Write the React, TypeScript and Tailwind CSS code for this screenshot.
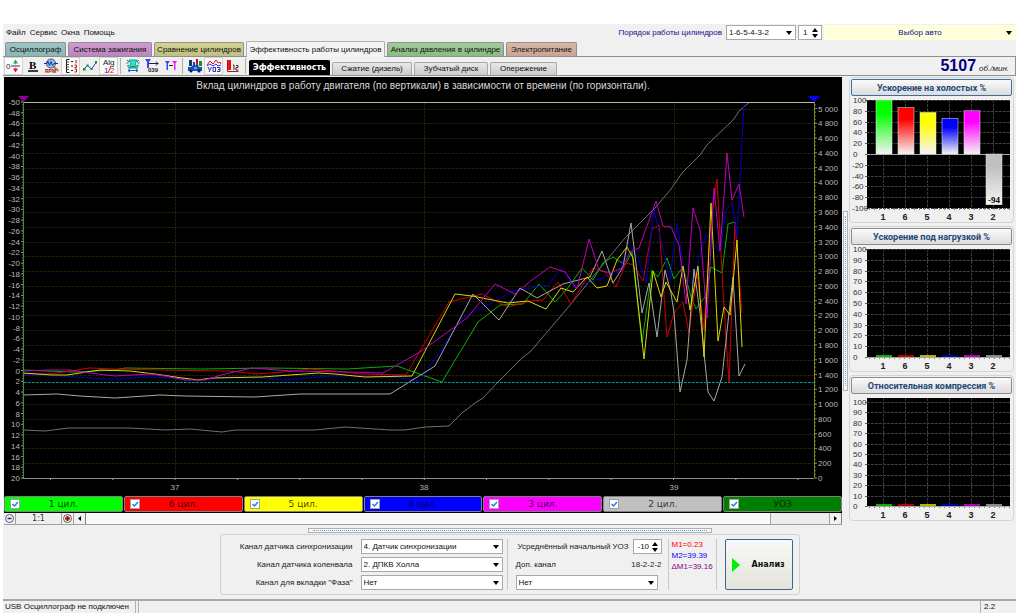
import { useState } from "react";
import type { ReactNode } from "react";
import clsx from "clsx";

/** A polyline of the main chart, in chart units. */
interface Series {
    color: string;
    points: string;
}

/** One of the three small bar charts on the right. */
interface MiniChartProps {
    title: string;
    /** Values in the order of the cylinders below; null when nothing was measured. */
    values: number[] | null;
    /** Lowest value of the scale. */
    min: number;
    step: number;
    /** Position of the 100 % mark. */
    top: number;
    focused?: boolean;
}

const CYLINDERS = ["1", "6", "5", "4", "3", "2"];
const BAR_COLORS = ["#00ff00", "#ff0000", "#ffff00", "#0000ff", "#ff00ff", "#c0c0c0"];

const SERIES: Series[] = [
    {
        color: "#707070",
        points: "23,430 45,431 68,428 130,428 165,430 190,429 222,432 235,430 315,430 345,427 390,430 405,430 425,427 449,426 462,413 475,403 483,398 498,382 522,358 530,352 571,304 600,268 625,238 655,208 671,189 682,173 700,155 707,145 733,120 740,110 750,102",
    },
    {
        color: "#00b400",
        points: "23,370 48,371 75,372 115,370 125,368 200,369 267,368 347,369 397,366 442,382 478,322 500,305 523,304 539,284 555,302 567,289 582,268 593,280 603,263 613,257 625,265 632,252 642,343 652,270 658,277 667,258 674,279 683,267 691,297 696,309 705,297 711,267 722,273 728,224 735,222",
    },
    {
        color: "#d00000",
        points: "23,374 50,374 70,371 90,368 115,369 160,370 230,371 257,374 283,372 310,369 335,371 360,374 406,375 430,334 449,302 482,294 508,307 530,301 543,300 558,282 571,304 593,268 605,272 616,287 626,263 633,265 643,281 652,229 659,225 667,337 674,313 683,302 689,333 697,273 704,330 711,220 717,179 723,290 729,383 735,222 742,313",
    },
    {
        color: "#0000c0",
        points: "23,374 60,376 90,378 115,379 145,377 175,378 200,380 230,377 255,377 285,380 330,376 365,376 400,378 420,381 462,318 480,309 513,291 548,285 560,270 563,270 575,288 587,283 620,272 628,243 638,258 646,283 654,210 670,280 677,223 685,277 692,285 706,234 720,252 726,210 732,203 737,237 744,103",
    },
    {
        color: "#a8a8a8",
        points: "23,395 57,394 80,396 115,398 160,395 185,396 255,397 300,394 390,394 435,366 473,294 499,320 520,288 537,298 563,284 590,277 602,251 613,283 623,267 631,223 642,313 649,283 657,337 665,270 671,293 674,313 680,392 687,360 694,269 700,313 708,392 714,401 722,377 729,313 733,277 739,376 745,364",
    },
    {
        color: "#d8d800",
        points: "23,373 52,375 67,375 100,370 130,371 155,374 175,377 198,380 212,378 262,377 318,373 335,374 365,377 412,376 455,294 472,296 508,303 528,301 546,309 561,288 573,292 587,277 597,288 607,286 617,260 627,247 633,258 644,359 653,271 661,297 666,282 677,302 683,266 690,310 698,266 704,357 711,203 718,341 724,307 730,315 737,240 742,347",
    },
    {
        color: "#c000c0",
        points: "23,371 50,370 70,370 90,373 115,376 150,374 165,376 185,380 205,380 225,374 252,368 290,371 350,372 383,373 420,352 467,318 495,284 515,294 532,280 550,267 565,272 577,289 589,239 599,270 610,273 622,268 630,252 639,248 656,201 663,226 671,227 679,245 686,304 693,208 700,230 707,318 714,188 720,251 727,153 732,200 739,184 744,217",
    },
];

const LEGEND = [
    { label: "1 цил.", style: "bg-[#00ff00]" },
    { label: "6 цил.", style: "bg-[#ff0000]" },
    { label: "5 цил.", style: "bg-[#ffff00]" },
    { label: "4 цил.", style: "bg-[#0000ff]" },
    { label: "3 цил.", style: "bg-[#ff00ff]" },
    { label: "2 цил.", style: "bg-[#c0c0c0]" },
    { label: "УОЗ", style: "bg-[#008000]" },
];

const MAIN_TABS = [
    { label: "Осциллограф", style: "w-[61px] from-[#9cc4c4] to-[#8ab6b6]" },
    { label: "Система зажигания", style: "w-[84px] from-[#cf9bd0] to-[#bb84bd]" },
    { label: "Сравнение цилиндров", style: "w-[90px] from-[#d2d292] to-[#c0c080]" },
    { label: "Эффективность работы цилиндров", style: "w-[139px]" },
    { label: "Анализ давления в цилиндре", style: "w-[117px] from-[#a2cd9c] to-[#88bc82]" },
    { label: "Электропитание", style: "w-[71px] from-[#d8b8a6] to-[#c8a592]" },
];

const SUB_TABS = [
    { label: "Эффективность", style: "w-[81px]" },
    { label: "Сжатие (дизель)", style: "w-[80px]" },
    { label: "Зубчатый диск", style: "w-[74px]" },
    { label: "Опережение", style: "w-[67px]" },
];

/** Evenly spaced numbers from start to end, both included. */
function range(start: number, end: number, step: number) {
    const out: number[] = [];
    for (let v = start; v <= end; v += step) out.push(v);
    return out;
}

function Icon({ children }: { children: ReactNode }) {
    return (
        <svg viewBox="0 0 16 16" className="w-4 h-4" aria-hidden="true">
            {children}
        </svg>
    );
}

const ICON_FONT = "Liberation Sans, sans-serif";

const TOOLS: { name: string; pressed?: boolean; divider?: boolean; icon: ReactNode }[] = [
    {
        name: "Ноль",
        pressed: true,
        icon: (
            <Icon>
                <text x="0" y="11" fontSize="8" fontFamily={ICON_FONT} fill="#303030">0</text>
                <path d="M5 8h9" stroke="#303060" />
                <path d="M9.500 6.500v-4M9.500 9.500v4" stroke="#a0a0a0" />
                <path d="M7 5.500l2.500-4 2.500 4z" fill="#20b040" />
                <path d="M7 10.500l2.500 4 2.500-4z" fill="#f01010" />
            </Icon>
        ),
    },
    {
        name: "Жирные линии",
        icon: (
            <Icon>
                <text x="4" y="11" fontSize="11" fontWeight="bold" fontFamily="Liberation Serif, serif" fill="#000">B</text>
                <path d="M3 13h10" stroke="#000" strokeWidth="1.500" />
            </Icon>
        ),
    },
    {
        name: "Лупа RPM",
        icon: (
            <Icon>
                <path d="M9.500 8.500l5 4.500" stroke="#c08040" strokeWidth="2" />
                <circle cx="7" cy="5.500" r="4.500" fill="#8cc8f0" stroke="#405080" />
                <path d="M0 5.500h3l1-2 1.500 4 1.500-4 1.500 4 1.500-2h4" fill="none" stroke="#1030a0" />
                <text x="1" y="15" fontSize="5" fontWeight="bold" fontFamily={ICON_FONT} fill="#a01010">RPM</text>
            </Icon>
        ),
    },
    {
        name: "Шкала",
        pressed: true,
        icon: (
            <Icon>
                <path d="M6.500 1.500h-3v13h3" fill="none" stroke="#202020" />
                <path d="M4 4h2M4 6.500h2M4 9h2M4 11.500h2" stroke="#505050" />
                <path d="M8 3.500h2M8 8h2M8 12.500h2" stroke="#202020" />
                <path d="M13 2v3.500M11.500 7h2v2.500h-2M11.500 11h2v3h-2" fill="none" stroke="#c01010" />
            </Icon>
        ),
    },
    {
        name: "Сглаживание",
        icon: (
            <Icon>
                <path d="M2 11l3.500-3.500 4 3.500 5-7" fill="none" stroke="#2040d0" />
                <path d="M1 10h2.500v2.500h-2.500zM4.500 6.500h2v2h-2zM8.500 10h2v2h-2zM13 3h2v2.500h-2z" fill="#109020" />
            </Icon>
        ),
    },
    {
        name: "Алгоритм",
        pressed: true,
        icon: (
            <Icon>
                <text x="2" y="7" fontSize="8" fontFamily={ICON_FONT} fill="#202020">Alg</text>
                <text x="3" y="15" fontSize="8" fontFamily={ICON_FONT} fill="#2030e0">1</text>
                <path d="M7 15l3-7" stroke="#e02020" />
                <text x="9" y="15" fontSize="8" fontFamily={ICON_FONT} fill="#e02020">2</text>
            </Icon>
        ),
    },
    {
        name: "Двигатель",
        divider: true,
        icon: (
            <Icon>
                <path d="M2 2l2 2M14 2l-2 2M1.500 5h2M14.500 5h-2M2 8l2-1M14 8l-2-1" stroke="#108030" />
                <path d="M4 2h8l-2 4 3 4h-10l3-4z" fill="#30e0d8" stroke="#10a090" />
                <path d="M5 10c0-2 6-2 6 0" fill="none" stroke="#108030" />
                <path d="M3 12.500h10M5 11l-2 1.500 2 1.500M11 11l2 1.500-2 1.500" fill="none" stroke="#1060d0" />
            </Icon>
        ),
    },
    {
        name: "Маркер 039",
        icon: (
            <Icon>
                <path d="M1 1h6l-2 3v6h-2v-6z" fill="#4040ff" />
                <path d="M5 5.500h9M12 3.500l2 2-2 2" fill="none" stroke="#202020" />
                <text x="4" y="14" fontSize="6" fontWeight="bold" fontFamily={ICON_FONT} fill="#202020">039</text>
            </Icon>
        ),
    },
    {
        name: "Маркеры",
        icon: (
            <Icon>
                <path d="M2 3h5l-2 2.500v6.500h-1.500v-6.500z" fill="#4040ff" />
                <path d="M9 3h5l-1.500 2.500v6.500h-1.500v-6.500z" fill="#f020f0" />
                <path d="M6 7.500h4" stroke="#202020" />
            </Icon>
        ),
    },
    {
        name: "Эффективность авто",
        divider: true,
        icon: (
            <Icon>
                <path d="M2 2h3v6h-3z" fill="#104060" />
                <path d="M6 4h2v5h-2z" fill="#1040e0" />
                <path d="M9 1h2v6h-2z" fill="#c01010" />
                <path d="M12 3h3v5h-3z" fill="#109030" />
                <path d="M1 9h3l2-2h5l1 2h3v4h-14z" fill="#1050c0" />
                <circle cx="4" cy="13" r="1.500" fill="#102040" />
                <circle cx="12" cy="13" r="1.500" fill="#102040" />
                <path d="M7 10h3" stroke="#d0e8ff" />
            </Icon>
        ),
    },
    {
        name: "УОЗ",
        pressed: true,
        icon: (
            <Icon>
                <path d="M1 7l3-4 3 3 3-4 2 3 2-1 1 2" fill="none" stroke="#e01010" />
                <path d="M1 8l3-2 3 2 3-2 2 2 3-1" fill="none" stroke="#3030ff" />
                <path d="M2 9l1.500 3M5.500 9l-2.500 5M7 9.500h2.500v4h-2.500zM11 9.500h3v4h-3M12 11.500h2" fill="none" stroke="#3030c0" />
            </Icon>
        ),
    },
    {
        name: "Статистика",
        icon: (
            <Icon>
                <path d="M2 2h4v10h-4z" fill="#f01010" />
                <path d="M2.500 2v11.500h11" fill="none" stroke="#c01010" />
                <path d="M8 7h1v5M11 7.500h2v2h-2v2.500h2.500" fill="none" stroke="#303030" />
            </Icon>
        ),
    },
];

/** Black triangle shown inside drop-down fields. */
function Caret() {
    return (
        <svg viewBox="0 0 6 4" className="pointer-events-none absolute right-1 top-1/2 w-[6px] h-1 -translate-y-1/2" aria-hidden="true">
            <path d="M0 0h6l-3 4z" fill="#000" />
        </svg>
    );
}

interface SelectProps {
    id: string;
    value: string;
    options?: string[];
    className?: string;
    label?: string;
}

function Select({ id, value, options = [], className, label }: SelectProps) {
    const [current, setCurrent] = useState(value);
    return (
        <div className={clsx("relative", className)}>
            <select
                id={id}
                aria-label={label}
                value={current}
                onChange={e => setCurrent(e.target.value)}
                className="block w-full h-[15px] appearance-none border border-[#a8a8a8] bg-white pl-[2px] text-[8px] leading-3 text-[#101010]"
            >
                {[value, ...options].map(o => <option key={o}>{o}</option>)}
            </select>
            <Caret />
        </div>
    );
}

function Stepper({ id, initial, label, className }: { id: string; initial: string; label?: string; className: string }) {
    const [value, setValue] = useState(initial);
    return (
        <div className={clsx("relative shrink-0", className)}>
            <input
                id={id}
                aria-label={label}
                value={value}
                onChange={e => setValue(e.target.value)}
                className="block w-full h-[15px] border border-[#a8a8a8] bg-white pl-1 text-[8px] leading-3 text-[#101010]"
            />
            <svg viewBox="0 0 6 10" className="pointer-events-none absolute right-1 top-[3px] w-[6px] h-[10px]" aria-hidden="true">
                <path d="M0 4l3-4 3 4zM0 6h6l-3 4z" fill="#000" />
            </svg>
        </div>
    );
}

/** Contribution of each cylinder against time, with engine speed on the right axis. */
function MainChart() {
    const leftY = (v: number) => 102 + ((v + 50) * 376) / 70;
    const rightY = (v: number) => 478 - v * 0.0739;

    return (
        <svg viewBox="4 93 838 403" className="block w-full h-auto" fontFamily="Liberation Sans, sans-serif" fontSize="8">
            {range(200, 5000, 200).map(v => (
                <path key={v} d={`M24 ${Math.round(rightY(v)) + 0.5}H814`} stroke="#222200" strokeDasharray="3 1" />
            ))}
            {[175.5, 424.5, 674.5].map(x => (
                <path key={x} d={`M${x} 103V478`} stroke="#222200" strokeDasharray="3 1" />
            ))}

            {SERIES.map(s => (
                <polyline key={s.color} points={s.points} fill="none" stroke={s.color} />
            ))}
            <path d="M24 382.500H814" stroke="#009090" strokeDasharray="3 1" />

            {/* Frame and tick marks */}
            <path d="M23 102.500H814" stroke="#b8b8a8" />
            <path d="M23 478.500H814" stroke="#909090" />
            <path d="M23.500 102V478" stroke="#3c8c3c" />
            <path d="M814.500 102V478" stroke="#808020" />
            {range(-50, 20, 0.5).map(v => (
                <path key={v} d={`M22 ${leftY(v)}h1`} stroke="#686868" />
            ))}
            {range(0, 5050, 50).map(v => (
                <path key={v} d={`M815 ${rightY(v)}h1`} stroke="#686830" />
            ))}
            {range(50.5, 810, 62.3).map(x => (
                <path key={x} d={`M${x} 478v2`} stroke="#909090" />
            ))}

            <g fill="#b8b8b8">
                {range(-50, 20, 2).map(v => (
                    <text key={v} x="20" y={leftY(v) + 3} textAnchor="end">{v}</text>
                ))}
                {range(-50, 20, 2).map(v => (
                    <path key={v} d={`M21 ${leftY(v)}h2`} stroke="#909090" />
                ))}
                {range(0, 5000, 200).map(v => (
                    <text key={v} x="818" y={rightY(v) + 3}>
                        {v >= 1000 ? `${Math.floor(v / 1000)} ${String(v % 1000).padStart(3, "0")}` : v}
                    </text>
                ))}
                {range(0, 5000, 200).map(v => (
                    <path key={v} d={`M815 ${rightY(v)}h2`} stroke="#909060" />
                ))}
                <text x="175" y="490" textAnchor="middle">37</text>
                <text x="424" y="490" textAnchor="middle">38</text>
                <text x="674" y="490" textAnchor="middle">39</text>
            </g>

            <path d="M18 96h11l-5.500 6z" fill="#8c008c" />
            <path d="M808 96h12l-6 6z" fill="#0000ff" />
        </svg>
    );
}

function MiniChart({ title, values, min, step, top, focused }: MiniChartProps) {
    const bottom = 112;
    const y = (v: number) => bottom - ((v - min) * (bottom - top)) / (100 - min);

    return (
        <section className="rounded-sm border border-[#d4d4d4] pt-px px-px">
            <button
                type="button"
                className={clsx(
                    "block w-full h-[17px] rounded-[2px] border bg-linear-to-b from-[#fafafa] to-[#dcdcdc] font-[Roboto,sans-serif] text-[9px] leading-3 font-bold text-[#1c4878]",
                    focused ? "border-[#3c70a0]" : "border-[#8c8c8c]",
                )}
            >
                {title}
            </button>
            <svg viewBox="0 0 161 126" className="block w-full h-auto" fontFamily="Liberation Sans, sans-serif" fontSize="8">
                <defs>
                    {BAR_COLORS.map((c, i) => (
                        <linearGradient key={c} id={`bar${i}`} x1="0" y1="0" x2="0" y2="1">
                            <stop offset="0.25" stopColor={c} />
                            <stop offset="1" stopColor="#f4f4f4" />
                        </linearGradient>
                    ))}
                </defs>
                <rect x="16" y="4" width="143" height="108" fill="#000" />
                {range(min, 100, step).map(v => (
                    <g key={v}>
                        <path d={`M16 ${Math.round(y(v)) + 0.5}h143`} stroke="#3c3c3c" strokeDasharray="3 1" />
                        <path d={`M14 ${Math.round(y(v)) + 0.5}h2`} stroke="#606060" />
                        <text x={v < 0 ? 1 : 2} y={y(v) + 3} fill="#303030">{v}</text>
                    </g>
                ))}
                {CYLINDERS.map((c, i) => (
                    <path key={c} d={`M${32.5 + i * 22} 4v108`} stroke="#3c3c3c" strokeDasharray="3 1" />
                ))}
                {range(18, 158, 5).map(x => (
                    <path key={x} d={`M${x + 0.5} 112v2`} stroke="#808080" />
                ))}
                <path d={`M16 ${Math.round(y(0)) + 0.5}h143`} stroke="#a8a8a8" />
                {CYLINDERS.map((c, i) => {
                    const value = values?.[i];
                    return (
                        <g key={c}>
                            {value === undefined ? (
                                <rect x={25 + i * 22} y="110" width="16" height="2" fill={BAR_COLORS[i]} opacity="0.7" />
                            ) : (
                                <rect
                                    x={25 + i * 22}
                                    y={y(Math.max(value, 0))}
                                    width="16"
                                    height={Math.abs(y(value) - y(0))}
                                    fill={`url(#bar${i})`}
                                    stroke="#e8e8e8"
                                    strokeWidth="0.500"
                                />
                            )}
                            {value !== undefined && value < 0 && (
                                <text x={33 + i * 22} y={y(value) - 2} textAnchor="middle" fontFamily="Liberation Serif, serif" fontWeight="bold" fontSize="9" fill="#000">
                                    {value}
                                </text>
                            )}
                            <text x={32 + i * 22} y="124" textAnchor="middle" fontSize="9" fontWeight="bold" fill="#202020">{c}</text>
                        </g>
                    );
                })}
            </svg>
        </section>
    );
}

function LegendItem({ label, style }: { label: string; style: string }) {
    const [checked, setChecked] = useState(true);
    return (
        <label className={clsx("relative flex flex-1 items-center justify-center h-4 rounded-[2px] border border-[#808080]", style)}>
            <span className="absolute left-[5px] grid">
                <input
                    type="checkbox"
                    checked={checked}
                    onChange={() => setChecked(!checked)}
                    className="col-start-1 row-start-1 w-[10px] h-[10px] appearance-none border border-[#a0a0a0] bg-white"
                />
                {checked && (
                    <svg viewBox="0 0 10 10" className="pointer-events-none col-start-1 row-start-1 w-[10px] h-[10px]" aria-hidden="true">
                        <path d="M2.500 5l2 2 3.500-4" fill="none" stroke="#2080e8" strokeWidth="1.500" />
                    </svg>
                )}
            </span>
            <span className="font-['DejaVu_Sans',sans-serif] text-[9px] leading-3 text-black/75">{label}</span>
        </label>
    );
}

function ScrollRow() {
    return (
        <div className="flex h-3 bg-[#f8f8f8] border-b border-[#a0a0a0] text-[9px] leading-3">
            <button type="button" aria-label="Уменьшить" className="w-3 border-r border-[#a0a0a0] bg-[#f0f0f0]">
                <svg viewBox="0 0 11 11" className="w-[11px] h-[11px]">
                    <circle cx="5.500" cy="5.500" r="4" fill="#f4f4f4" stroke="#606060" />
                    <path d="M3.500 5.500h4" stroke="#2020a0" strokeWidth="1.500" />
                </svg>
            </button>
            <div className="w-[46px] bg-[#eeeeee] border-r border-[#a0a0a0] text-center font-['DejaVu_Sans',sans-serif] text-[8px] text-[#303030]">1:1</div>
            <button type="button" aria-label="Увеличить" className="w-3 border-r border-[#a0a0a0] bg-[#f0f0f0]">
                <svg viewBox="0 0 11 11" className="w-[11px] h-[11px]">
                    <circle cx="5.500" cy="5.500" r="4" fill="#f4f4f4" stroke="#606060" />
                    <path d="M3 5.500h5M5.500 3v5" stroke="#a01010" strokeWidth="2" />
                </svg>
            </button>
            <button type="button" aria-label="Влево" className="w-3 border-r border-[#808080] bg-[#f0f0f0]">
                <svg viewBox="0 0 11 11" className="w-[11px] h-[11px]"><path d="M7 3v5l-3-2.500z" fill="#000" /></svg>
            </button>
            <div className="flex flex-1 justify-end">
                <div className="w-[60px] border-x border-[#a0a0a0] bg-[#ececec]" />
            </div>
            <button type="button" aria-label="Вправо" className="w-3 border-r border-[#808080] bg-[#f0f0f0]">
                <svg viewBox="0 0 11 11" className="w-[11px] h-[11px]"><path d="M4 3v5l3-2.500z" fill="#000" /></svg>
            </button>
        </div>
    );
}

function SensorPanel() {
    return (
        <div className="mx-auto flex w-[580px] items-stretch rounded-[3px] border border-[#d0d0d0] px-[6px] py-1">
            <div className="grid flex-1 grid-cols-[1fr_142px] items-center gap-x-2 gap-y-[3px] text-right text-[8px] leading-3 text-[#202020]">
                <label htmlFor="sync">Канал датчика синхронизации</label>
                <Select id="sync" value="4.  Датчик синхронизации" className="text-left" />
                <label htmlFor="crank">Канал датчика коленвала</label>
                <Select id="crank" value="2.  ДПКВ Холла" className="text-left" />
                <label htmlFor="phase">Канал для вкладки "Фаза"</label>
                <Select id="phase" value="Нет" className="text-left" />
            </div>
            <div className="ml-1 flex w-[162px] flex-col justify-between border-x border-[#c8c8c8] pl-2 pr-[6px] text-[8px] leading-3 text-[#202020]">
                <div className="flex items-center justify-end gap-1">
                    <label htmlFor="uoz" className="whitespace-nowrap">Усреднённый начальный УОЗ</label>
                    <Stepper id="uoz" initial="-10" className="w-[29px]" />
                </div>
                <div className="flex justify-between">
                    <label htmlFor="extra">Доп. канал</label>
                    <span>18-2-2-2</span>
                </div>
                <Select id="extra" value="Нет" className="mr-1" />
            </div>
            <div className="w-12 border-r border-[#c8c8c8] pl-[3px] text-[8px] leading-[11px]">
                <p className="text-[#ff0000]">M1=0.23</p>
                <p className="text-[#0000ff]">M2=39.39</p>
                <p className="text-[#800080]">ΔM1=39.16</p>
            </div>
            <button
                type="button"
                className="ml-2 flex w-[68px] items-center gap-3 rounded-[2px] border border-[#3c6890] bg-linear-to-b from-[#f8f8f8] to-[#e4e4dc] pl-[6px] font-['DejaVu_Sans',sans-serif] text-[8px] font-bold text-[#101010]"
            >
                <svg viewBox="0 0 8 14" className="w-2 h-[14px]" aria-hidden="true"><path d="M0 0l8 7-8 7z" fill="#00f000" /></svg>
                Анализ
            </button>
        </div>
    );
}

export default function App() {
    const [mainTab, setMainTab] = useState(3);
    const [subTab, setSubTab] = useState(0);

    return (
        <div className="bg-white pt-6 pl-[3px] pr-2 font-['Liberation_Sans',sans-serif] text-[#101010]">
            <div className="bg-[#f0f0f0]">
                <header className="flex h-[17px] items-center text-[8px] leading-3">
                    <nav className="flex flex-1 gap-1 pl-[3px]">
                        {["Файл", "Сервис", "Окна", "Помощь"].map(item => (
                            <button key={item} type="button">{item}</button>
                        ))}
                    </nav>
                    <label htmlFor="order" className="mr-1 text-[#10108c]">Порядок работы цилиндров</label>
                    <Select id="order" value="1-6-5-4-3-2" className="w-[70px]" />
                    <Stepper id="count" label="Номер" initial="1" className="ml-[2px] mr-[2px] w-6" />
                    <button type="button" className="relative h-[15px] w-[192px] bg-[#ffffdc] text-[#10108c]">
                        Выбор авто
                        <Caret />
                    </button>
                </header>

                <div className="flex h-4 items-end gap-[2px] border-b border-[#909090] pl-[2px] text-[8px] leading-3">
                    {MAIN_TABS.map((tab, i) => (
                        <button
                            key={tab.label}
                            type="button"
                            onClick={() => setMainTab(i)}
                            className={clsx(
                                "shrink-0 whitespace-nowrap rounded-t-[2px] border border-b-0 text-center",
                                i === mainTab
                                    ? "-mb-px h-4 border-[#b0b0b0] bg-[#f4f4f4]"
                                    : "h-[14px] border-[#909090] bg-linear-to-b",
                                tab.style,
                            )}
                        >
                            {tab.label}
                        </button>
                    ))}
                </div>

                <div className="flex h-[19px] items-end border-b border-r border-[#909090] pl-px">
                    <div className="flex items-center self-stretch">
                        {TOOLS.map(tool => (
                            <div key={tool.name} className="flex items-center">
                                {tool.divider && <span className="mx-[2px] h-4 w-px bg-[#b0b0b0]" />}
                                <button
                                    type="button"
                                    title={tool.name}
                                    className={clsx(
                                        "flex h-[18px] w-[19px] items-center justify-center border",
                                        tool.pressed ? "border-[#d0d0d0] bg-[#fbfbfb]" : "border-transparent",
                                    )}
                                >
                                    {tool.icon}
                                </button>
                            </div>
                        ))}
                        <span className="mx-[3px] h-4 w-px bg-[#b0b0b0]" />
                    </div>
                    <div className="flex flex-1 items-end gap-[2px]">
                        {SUB_TABS.map((tab, i) => (
                            <button
                                key={tab.label}
                                type="button"
                                onClick={() => setSubTab(i)}
                                className={clsx(
                                    "rounded-t-[2px] border border-b-0 text-[8px] leading-3",
                                    i === subTab
                                        ? "h-[15px] border-black bg-black font-['DejaVu_Sans',sans-serif] font-bold text-white"
                                        : "h-[13px] border-[#a8a8a8] bg-linear-to-b from-[#e8e8e8] to-[#cccccc]",
                                    tab.style,
                                )}
                            >
                                {tab.label}
                            </button>
                        ))}
                    </div>
                    <p className="flex items-baseline gap-[3px] pr-[6px] text-base leading-4 font-bold text-[#000080]">
                        5107
                        <span className="text-[8px] leading-3 font-normal italic text-[#202020]">об./мин.</span>
                    </p>
                </div>

                <main className="flex items-start pl-px pr-[2px] pt-px">
                    <div className="min-w-0 flex-1">
                        <div className="bg-black">
                            <h1 className="h-4 pt-[2px] text-center text-[10px] leading-[14px] text-[#d8d8d8]">
                                Вклад цилиндров в работу двигателя (по вертикали) в зависимости от времени (по горизонтали).
                            </h1>
                            <MainChart />
                            <div className="flex gap-px pb-px">
                                {LEGEND.map(item => <LegendItem key={item.label} {...item} />)}
                            </div>
                        </div>
                        <ScrollRow />
                    </div>
                    <div className="flex w-[7px] justify-center self-center">
                        <div className="flex h-[180px] w-[5px] justify-center border border-[#b0b0b0] bg-[#f8f8f8] py-1">
                            <div className="w-px border-l border-dotted border-[#60a8f0]" />
                        </div>
                    </div>
                    <div className="flex w-[165px] flex-col gap-[3px]">
                        <MiniChart title="Ускорение на холостых %" values={[100, 86, 77, 66, 80, -94]} min={-100} step={20} top={4} focused />
                        <MiniChart title="Ускорение под нагрузкой %" values={null} min={0} step={10} top={4} />
                        <MiniChart title="Относительная компрессия %" values={null} min={0} step={10} top={8} />
                    </div>
                </main>

                <div className="pt-[3px] pb-1">
                    <div className="mx-auto mb-px flex h-[5px] w-[404px] items-center border border-[#b0b0b0] bg-[#f8f8f8] px-1">
                        <div className="h-px flex-1 border-t border-dotted border-[#60a8f0]" />
                    </div>
                    <SensorPanel />
                </div>

                <footer className="flex h-[14px] items-center border-t-2 border-[#a8a8a8] text-[8px] leading-3">
                    <div className="w-[133px] border-r border-[#b0b0b0] pl-[2px]">USB Осциллограф не подключен</div>
                    <div className="ml-[2px] flex-1 border-l border-[#b0b0b0]">&nbsp;</div>
                    <div className="w-9 border-l border-[#b0b0b0] pl-[3px]">2.2</div>
                </footer>
            </div>
        </div>
    );
}
